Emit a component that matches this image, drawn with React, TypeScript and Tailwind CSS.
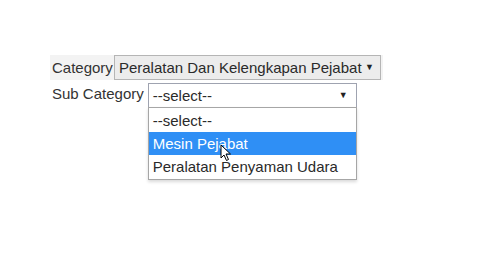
import React from "react";

const subOptions = ["--select--", "Mesin Pejabat", "Peralatan Penyaman Udara"];

function Arrow() {
  return <span className="text-[9px] leading-none text-[#222]">▼</span>;
}

export default function App() {
  return (
    <div
      className="relative w-[480px] h-[270px] bg-white overflow-hidden pt-[55px] pl-[50px] text-[15px] text-[#333]"
      style={{ fontFamily: '"Liberation Sans", Arial, sans-serif' }}
    >
      <div className="flex flex-col gap-[3px] w-[333px]">
        {/* category row */}
        <div className="flex items-center h-[25px] bg-[#f3f3f3]">
          <span className="pl-[2px] pr-[1px] leading-none">Category</span>
          <div className="flex items-center justify-between h-[25px] w-[267px] border border-[#b5b5b5] bg-[#ececec] pl-[4px] pr-[6px]">
            <span className="leading-none text-[#2a2a2a]">Peralatan Dan Kelengkapan Pejabat</span>
            <Arrow />
          </div>
        </div>

        {/* sub category row */}
        <div className="flex items-start">
          <span className="pl-[2px] pr-[4px] leading-[22px]">Sub Category</span>
          <div className="relative w-[209px]">
            <div className="flex items-center justify-between h-[25px] border border-[#9fa3b0] bg-white pl-[4px] pr-[8px]">
              <span className="leading-none text-[#2a2a2a]">--select--</span>
              <Arrow />
            </div>
            <div className="absolute left-0 top-[24px] w-[209px] border border-[#a6a6a6] bg-white shadow-[0_2px_3px_rgba(0,0,0,0.15)] py-[1px]">
              {subOptions.map((o, i) => (
                <div
                  key={o}
                  className={`h-[23px] flex items-center pl-[4px] leading-none ${
                    i === 1 ? "bg-[#2f8ff5] text-white" : "text-[#2a2a2a]"
                  }`}
                >
                  {o}
                </div>
              ))}
            </div>
          </div>
        </div>
      </div>

      {/* mouse cursor */}
      <svg className="absolute left-[220px] top-[144px]" width="12" height="18" viewBox="0 0 12 18">
        <path d="M1 1 L1 14 L4 11 L6.5 16.5 L8.5 15.5 L6 10 L10.5 10 Z" fill="white" stroke="black" strokeWidth="1" strokeLinejoin="round" />
      </svg>
    </div>
  );
}
